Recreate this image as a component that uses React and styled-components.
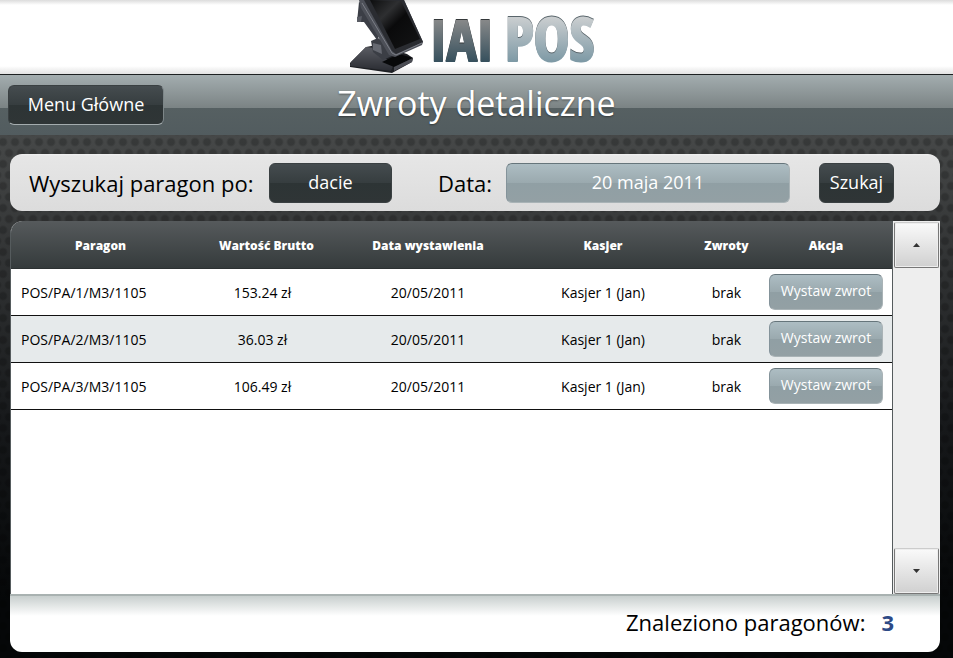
import React from "react";
import styled, { createGlobalStyle, css } from "styled-components";

const GlobalStyle = createGlobalStyle`
  * {
    box-sizing: border-box;
  }

  body {
    margin: 0;
    font-family: "Open Sans", "Noto Sans", sans-serif;
    color: #000;
  }
`;

const Page = styled.div`
  display: flex;
  flex-direction: column;
  min-height: 100vh;
  background:
    radial-gradient(circle at 50% 50%, rgba(0, 0, 0, 0.2) 3px, transparent 5px) 3px 10px / 12px 22px,
    radial-gradient(circle at 50% 50%, rgba(0, 0, 0, 0.2) 3px, transparent 5px) 9px 21px / 12px 22px,
    linear-gradient(#4c4e4e 0, #464848 135px, #17191b 420px, #050708 600px);
`;

const Brand = styled.header`
  display: flex;
  justify-content: center;
  height: 74px;
  background: linear-gradient(#dcdcdc 0, #fff 5px, #fff 66px, #e2e2e2 100%);
`;

const TitleBar = styled.div`
  display: grid;
  grid-template-columns: 1fr auto 1fr;
  align-items: center;
  height: 61px;
  padding: 0 8px;
  border-top: 1px solid #1c2021;
  background: linear-gradient(#a3adaf 0, #7b8384 33px, #566062 33px, #525c5f 100%);
`;

const Title = styled.h1`
  margin: 0;
  color: #fff;
  font-size: 34px;
  font-weight: 400;
  line-height: 48px;
  padding-bottom: 4px;
  text-shadow: 0 1px 2px rgba(0, 0, 0, 0.4);
`;

const dark = css`
  border: 1px solid #3a4042;
  background: linear-gradient(#454c4f 0, #363d3f 50%, #2d3435 50%, #2f3536 100%);
`;

const light = css`
  border: 1px solid #a9b3b6;
  border-top-color: #66757b;
  border-left-color: #84939a;
  background: linear-gradient(#adbdc3 0, #9aa9ae 50%, #909fa4 50%, #93a0a4 100%);
`;

const Button = styled.button`
  ${({ $light }) => ($light ? light : dark)};
  flex: ${({ $grow }) => ($grow ? "1" : "none")};
  width: ${({ $width }) => $width || "auto"};
  height: ${({ $small }) => ($small ? "36px" : "40px")};
  padding: 0 0 2px;
  border-radius: 6px;
  color: #fff;
  font-family: inherit;
  font-size: ${({ $small }) => ($small ? "14px" : "18px")};
  font-weight: ${({ $small }) => ($small ? "500" : "400")};
  line-height: 24px;
  cursor: pointer;
`;

const MenuButton = styled(Button)`
  justify-self: start;
  border-bottom-color: #a4acae;
  border-right-color: #7d8688;
`;

const Content = styled.main`
  flex: 1;
  display: flex;
  flex-direction: column;
  gap: 10px;
  padding: 19px 13px 6px 10px;
`;

const SearchForm = styled.form`
  display: flex;
  align-items: center;
  height: 57px;
  padding: 0 46px 0 19px;
  border-radius: 12px;
  background: linear-gradient(#f0f0f0 0, #e6e6e6 2px, #dcdcdc 100%);
`;

const SearchLabel = styled.label`
  flex: none;
  width: ${({ $width }) => $width};
  font-size: 22px;
  line-height: 30px;
  white-space: nowrap;
`;

const DateGroup = styled.div`
  flex: 1;
  display: flex;
  align-items: center;
  margin: 0 29px 0 46px;
`;

const Panel = styled.section`
  flex: 1;
  display: flex;
  flex-direction: column;
  overflow: hidden;
  border-radius: 12px 0 12px 12px;
`;

const List = styled.div`
  flex: 1;
  display: flex;
`;

const TableArea = styled.div`
  flex: 1;
  border: 1px solid #555b5d;
  border-width: 0 1px;
  border-radius: 12px 0 0 0;
  overflow: hidden;
  background: #fff;
`;

const Table = styled.table`
  width: 100%;
  table-layout: fixed;
  border-spacing: 0;
  font-size: 14px;
  line-height: 20px;
  text-align: center;

  thead {
    background: linear-gradient(#565a5c 0, #343a3b 100%);
  }
`;

const Th = styled.th`
  width: ${({ $width }) => $width};
  height: 48px;
  padding: 2px 0 0;
  border-bottom: 1px solid #2c3132;
  color: #fff;
  font-size: 12px;
  font-weight: 800;
`;

const Row = styled.tr`
  background: #fff;

  &:nth-child(even) {
    background: #e6eaeb;
  }
`;

const Td = styled.td`
  height: 47px;
  padding: ${({ $padding }) => $padding || "2px 0 0"};
  border-bottom: 1px solid #111;
  text-align: ${({ $align }) => $align || "center"};
`;

const ScrollTrack = styled.div`
  display: flex;
  flex-direction: column;
  justify-content: space-between;
  width: 47px;
  padding: 1px 1px 0;
  background: #eee;
`;

const ScrollButton = styled.button`
  display: flex;
  align-items: center;
  justify-content: center;
  width: 45px;
  height: 46px;
  padding: 0;
  border: 1px solid #777;
  border-top-color: #ccc;
  border-radius: 2px;
  background: linear-gradient(#fafafa, #d0d0d0);
  box-shadow: inset 0 0 0 1px #eee;
  cursor: pointer;
`;

const Summary = styled.footer`
  display: flex;
  align-items: center;
  justify-content: flex-end;
  gap: 16px;
  height: 58px;
  padding: 0 46px 4px 0;
  border-top: 2px solid #a9b2b1;
  background: linear-gradient(#c8cfce 0, #fff 20px);
  font-size: 22px;
  line-height: 30px;
`;

const Count = styled.strong`
  color: #2d4a86;
`;

const LogoSvg = styled.svg`
  flex: none;
  overflow: visible;
`;

const columns = [
  { label: "Paragon", width: "179px" },
  { label: "Wartość Brutto", width: "153px" },
  { label: "Data wystawienia", width: "170px" },
  { label: "Kasjer", width: "180px" },
  { label: "Zwroty", width: "67px" },
  { label: "Akcja", width: "132px" },
];

const receipts = [
  { id: "POS/PA/1/M3/1105", gross: "153.24 zł" },
  { id: "POS/PA/2/M3/1105", gross: "36.03 zł" },
  { id: "POS/PA/3/M3/1105", gross: "106.49 zł" },
].map(receipt => ({
  ...receipt,
  date: "20/05/2011",
  cashier: "Kasjer 1 (Jan)",
  returns: "brak",
}));

const Logo = () => (
  <LogoSvg width="256" height="74" viewBox="0 0 256 74" role="img" aria-label="IAI POS">
    <defs>
      <linearGradient id="screen" x1="0" y1="0" x2="1" y2="1">
        <stop offset="0" stopColor="#0c0d0e" />
        <stop offset="0.3" stopColor="#2e2f31" />
        <stop offset="0.5" stopColor="#0a0a0b" />
        <stop offset="1" stopColor="#141516" />
      </linearGradient>
      <linearGradient id="stand" x1="0" y1="0" x2="0" y2="1">
        <stop offset="0" stopColor="#5a5c63" />
        <stop offset="1" stopColor="#2a2c32" />
      </linearGradient>
      <linearGradient id="iai" gradientUnits="userSpaceOnUse" x1="0" y1="18" x2="0" y2="62">
        <stop offset="0" stopColor="#8b8b8b" />
        <stop offset="1" stopColor="#36505d" />
      </linearGradient>
      <linearGradient id="pos" gradientUnits="userSpaceOnUse" x1="0" y1="18" x2="0" y2="62">
        <stop offset="0" stopColor="#c9cdcf" />
        <stop offset="1" stopColor="#7d99a5" />
      </linearGradient>
    </defs>
    {/* base */}
    <path d="M17 47 L28 45 L58 54 L64 58 L63 62 L43 73 L1 67 L1 63 Z" fill="#1d1f23" />
    <path d="M17 47 L27 48 L44 66 L42 71 L1 66 L2 62 Z" fill="url(#stand)" />
    <path d="M33 62 L50 54 L64 58 L45 67 Z" fill="#08090a" />
    <path d="M45 67 L64 58 L63 62 L45 71 Z" fill="#4b4d54" />
    {/* neck */}
    <path d="M22 41 L29 38 L38 44 L43 56 L34 60 L24 52 Z" fill="#3b3e45" />
    <path d="M24 43 L32 45 L33 54 L24 50 Z" fill="#666971" />
    {/* back hinge and cable cover */}
    <path d="M10 2 L14 4 L21 20 L30 36 L28 40 L15 22 L8 22 Z" fill="#3b3e46" />
    <path d="M8 17 L13 16 L12 22 L8 22 Z" fill="#595c64" />
    {/* monitor */}
    <path d="M10 0 L55 0 L74 42 L73 45 L46 57 L40 55 L12 8 Z" fill="#4d5058" />
    <path d="M15 0 L55 0 L74 42 L47 54 L43 51 Z" fill="#2a2c31" />
    <path d="M21 0 L52 1 L71 39 L46 49 Z" fill="url(#screen)" />
    <path d="M13 3 L43 53 L47 55 L73 43" stroke="#7b7e86" strokeWidth="1" fill="none" />
    <g
      fontFamily="'Liberation Sans Narrow', 'Open Sans Condensed', 'Liberation Sans', sans-serif"
      fontWeight="700"
      strokeWidth="2"
    >
      <text x="81" y="60" fontSize="56" fill="#34383a" stroke="#34383a">
        IAI
      </text>
      <text x="81" y="61" fontSize="56" fill="url(#iai)" stroke="url(#iai)">
        IAI
      </text>
      <text x="156" y="60" fontSize="60" fill="#59656b" stroke="#59656b">
        POS
      </text>
      <text x="156" y="61" fontSize="60" fill="url(#pos)" stroke="url(#pos)">
        POS
      </text>
    </g>
  </LogoSvg>
);

const Arrow = ({ down }) => (
  <svg width="7" height="4" viewBox="0 0 7 4" aria-hidden="true">
    <path d={down ? "M0 0 H7 L3.5 4 Z" : "M0 4 H7 L3.5 0 Z"} fill="#333" />
  </svg>
);

const App = () => (
  <Page>
    <GlobalStyle />
    <Brand>
      <Logo />
    </Brand>
    <TitleBar>
      <MenuButton type="button" $width="156px">
        Menu Główne
      </MenuButton>
      <Title>Zwroty detaliczne</Title>
    </TitleBar>
    <Content>
      <SearchForm onSubmit={ev => ev.preventDefault()}>
        <SearchLabel htmlFor="criterion" $width="240px">
          Wyszukaj paragon po:
        </SearchLabel>
        <Button id="criterion" type="button" $width="123px">
          dacie
        </Button>
        <DateGroup>
          <SearchLabel htmlFor="date" $width="68px">
            Data:
          </SearchLabel>
          <Button id="date" type="button" $light $grow>
            20 maja 2011
          </Button>
        </DateGroup>
        <Button type="submit" $width="75px">
          Szukaj
        </Button>
      </SearchForm>
      <Panel>
        <List>
          <TableArea>
            <Table>
              <thead>
                <tr>
                  {columns.map(({ label, width }) => (
                    <Th key={label} $width={width}>
                      {label}
                    </Th>
                  ))}
                </tr>
              </thead>
              <tbody>
                {receipts.map(({ id, gross, date, cashier, returns }) => (
                  <Row key={id}>
                    <Td $align="left" $padding="2px 0 0 10px">
                      {id}
                    </Td>
                    <Td $padding="2px 8px 0 0">{gross}</Td>
                    <Td>{date}</Td>
                    <Td>{cashier}</Td>
                    <Td>{returns}</Td>
                    <Td $padding="0">
                      <Button type="button" $light $small $width="114px">
                        Wystaw zwrot
                      </Button>
                    </Td>
                  </Row>
                ))}
              </tbody>
            </Table>
          </TableArea>
          <ScrollTrack>
            <ScrollButton type="button" aria-label="Przewiń w górę">
              <Arrow />
            </ScrollButton>
            <ScrollButton type="button" aria-label="Przewiń w dół">
              <Arrow down />
            </ScrollButton>
          </ScrollTrack>
        </List>
        <Summary>
          <span>Znaleziono paragonów:</span>
          <Count>{receipts.length}</Count>
        </Summary>
      </Panel>
    </Content>
  </Page>
);

export default App;
